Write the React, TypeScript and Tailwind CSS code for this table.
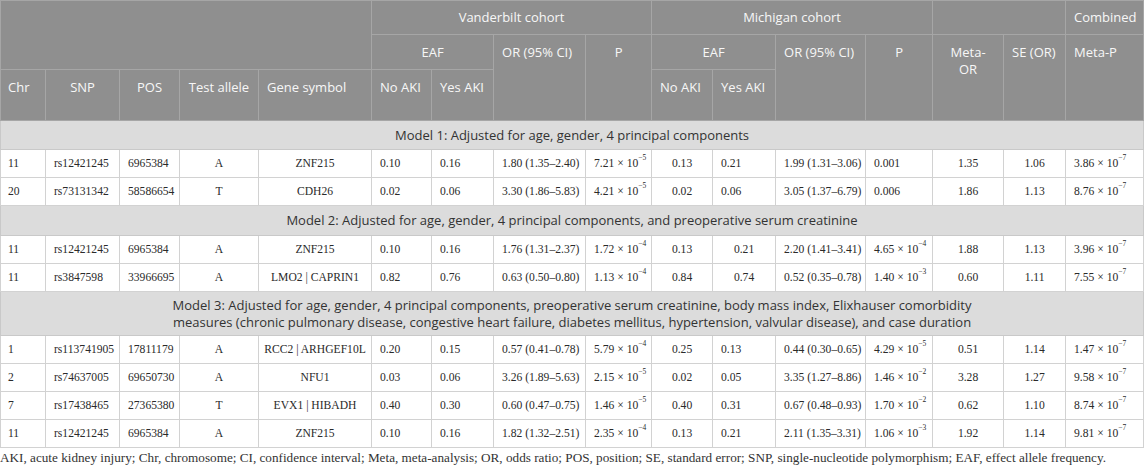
import React from "react";

type PV = string | { m: string; e: string };

type Row = {
  c: [string, string, string, string, string, string, string, string, PV, string, string, string, PV, string, string, PV];
  mYesCenter?: boolean;
};

const serif = "font-['Liberation_Serif','Times_New_Roman',serif]";
const sans = "font-['Open_Sans','Noto_Sans',sans-serif]";

const model1: Row[] = [
  { c: ["11", "rs12421245", "6965384", "A", "ZNF215", "0.10", "0.16", "1.80 (1.35–2.40)", { m: "7.21", e: "−5" }, "0.13", "0.21", "1.99 (1.31–3.06)", "0.001", "1.35", "1.06", { m: "3.86", e: "−7" }] },
  { c: ["20", "rs73131342", "58586654", "T", "CDH26", "0.02", "0.06", "3.30 (1.86–5.83)", { m: "4.21", e: "−5" }, "0.02", "0.06", "3.05 (1.37–6.79)", "0.006", "1.86", "1.13", { m: "8.76", e: "−7" }] },
];
const model2: Row[] = [
  { c: ["11", "rs12421245", "6965384", "A", "ZNF215", "0.10", "0.16", "1.76 (1.31–2.37)", { m: "1.72", e: "−4" }, "0.13", "0.21", "2.20 (1.41–3.41)", { m: "4.65", e: "−4" }, "1.88", "1.13", { m: "3.96", e: "−7" }], mYesCenter: true },
  { c: ["11", "rs3847598", "33966695", "A", "LMO2 | CAPRIN1", "0.82", "0.76", "0.63 (0.50–0.80)", { m: "1.13", e: "−4" }, "0.84", "0.74", "0.52 (0.35–0.78)", { m: "1.40", e: "−3" }, "0.60", "1.11", { m: "7.55", e: "−7" }], mYesCenter: true },
];
const model3: Row[] = [
  { c: ["1", "rs113741905", "17811179", "A", "RCC2 | ARHGEF10L", "0.20", "0.15", "0.57 (0.41–0.78)", { m: "5.79", e: "−4" }, "0.25", "0.13", "0.44 (0.30–0.65)", { m: "4.29", e: "−5" }, "0.51", "1.14", { m: "1.47", e: "−7" }] },
  { c: ["2", "rs74637005", "69650730", "A", "NFU1", "0.03", "0.06", "3.26 (1.89–5.63)", { m: "2.15", e: "−5" }, "0.02", "0.05", "3.35 (1.27–8.86)", { m: "1.46", e: "−2" }, "3.28", "1.27", { m: "9.58", e: "−7" }] },
  { c: ["7", "rs17438465", "27365380", "T", "EVX1 | HIBADH", "0.40", "0.30", "0.60 (0.47–0.75)", { m: "1.46", e: "−5" }, "0.40", "0.31", "0.67 (0.48–0.93)", { m: "1.70", e: "−2" }, "0.62", "1.10", { m: "8.74", e: "−7" }] },
  { c: ["11", "rs12421245", "6965384", "A", "ZNF215", "0.10", "0.16", "1.82 (1.32–2.51)", { m: "2.35", e: "−4" }, "0.13", "0.21", "2.11 (1.35–3.31)", { m: "1.06", e: "−3" }, "1.92", "1.14", { m: "9.81", e: "−7" }] },
];

const widths = [45, 74, 60, 79, 113, 60, 62, 92, 66, 61, 63, 90, 67, 71, 62, 78];
const align = ["l", "l", "l", "c", "c", "l", "l", "l", "l", "c", "l", "l", "l", "c", "c", "l"];

function Val({ v }: { v: PV }) {
  if (typeof v === "string") return <>{v}</>;
  return (
    <>
      {v.m} × 10<sup className="text-[7.5px] relative -top-[2px] align-super">{v.e}</sup>
    </>
  );
}

function DataRow({ r }: { r: Row }) {
  return (
    <tr>
      {r.c.map((v, i) => {
        let a = align[i];
        if (i === 10 && r.mYesCenter) a = "c";
        const pad = i === 0 ? "pl-[7px] pr-1" : i === 4 ? "px-1" : "px-2";
        return (
          <td
            key={i}
            className={`h-[28px] border border-[#d2d2d2] ${pad} align-middle whitespace-nowrap ${a === "c" ? "text-center" : "text-left"}`}
          >
            <Val v={v} />
          </td>
        );
      })}
    </tr>
  );
}

function ModelRow({ h, children }: { h: string; children: React.ReactNode }) {
  return (
    <tr>
      <td
        colSpan={16}
        className={`${h} ${sans} text-[13px] leading-[17px] text-[#333] bg-[#dcdcdc] border border-[#c9c9c9] text-center align-middle`}
      >
        {children}
      </td>
    </tr>
  );
}

export default function App() {
  const hb = "border border-[#a6a6a6]";
  const th = `${hb} font-normal px-2`;
  return (
    <div className="w-[1145px] h-[465px] bg-white overflow-hidden">
      <table className={`table-fixed border-collapse w-[1144px] ${serif} text-[11.6px] text-[#2a2a2a]`}>
        <colgroup>
          {widths.map((w, i) => (
            <col key={i} style={{ width: w }} />
          ))}
        </colgroup>
        <thead className={`${sans} text-[13px] leading-[17px] text-[#f7f7f7] bg-[#8f8f8f]`}>
          <tr>
            <th colSpan={5} rowSpan={2} className={th}></th>
            <th colSpan={4} className={`${th} h-[34px] text-center`}>Vanderbilt cohort</th>
            <th colSpan={4} className={`${th} text-center`}>Michigan cohort</th>
            <th colSpan={2} className={th}></th>
            <th className={`${th} text-left`}>Combined</th>
          </tr>
          <tr>
            <th colSpan={2} className={`${th} h-[35px] text-center`}>EAF</th>
            <th rowSpan={2} className={`${th} text-left align-top pt-[9px]`}>OR (95% CI)</th>
            <th rowSpan={2} className={`${th} text-center align-top pt-[9px]`}>P</th>
            <th colSpan={2} className={`${th} text-center`}>EAF</th>
            <th rowSpan={2} className={`${th} text-left align-top pt-[9px]`}>OR (95% CI)</th>
            <th rowSpan={2} className={`${th} text-center align-top pt-[9px]`}>P</th>
            <th rowSpan={2} className={`${th} text-center align-top pt-[9px]`}>
              Meta-
              <br />
              OR
            </th>
            <th rowSpan={2} className={`${th} text-left align-top pt-[9px] whitespace-nowrap`}>SE (OR)</th>
            <th rowSpan={2} className={`${th} text-left align-top pt-[9px]`}>Meta-P</th>
          </tr>
          <tr>
            <th className={`${hb} font-normal pl-[7px] text-left align-top pt-[9px] h-[51px]`}>Chr</th>
            <th className={`${th} text-center align-top pt-[9px]`}>SNP</th>
            <th className={`${th} text-center align-top pt-[9px]`}>POS</th>
            <th className={`${th} text-center align-top pt-[9px] whitespace-nowrap`}>Test allele</th>
            <th className={`${th} text-left align-top pt-[9px]`}>Gene symbol</th>
            <th className={`${th} text-left align-top pt-[9px] whitespace-nowrap`}>No AKI</th>
            <th className={`${th} text-left align-top pt-[9px] whitespace-nowrap`}>Yes AKI</th>
            <th className={`${th} text-left align-top pt-[9px] whitespace-nowrap`}>No AKI</th>
            <th className={`${th} text-left align-top pt-[9px] whitespace-nowrap`}>Yes AKI</th>
          </tr>
        </thead>
        <tbody>
          <ModelRow h="h-[29px]">Model 1: Adjusted for age, gender, 4 principal components</ModelRow>
          {model1.map((r, i) => (
            <DataRow key={i} r={r} />
          ))}
          <ModelRow h="h-[30px]">
            Model 2: Adjusted for age, gender, 4 principal components, and preoperative serum creatinine
          </ModelRow>
          {model2.map((r, i) => (
            <DataRow key={i} r={r} />
          ))}
          <ModelRow h="h-[44px]">
            Model 3: Adjusted for age, gender, 4 principal components, preoperative serum creatinine, body mass index, Elixhauser comorbidity
            <br />
            measures (chronic pulmonary disease, congestive heart failure, diabetes mellitus, hypertension, valvular disease), and case duration
          </ModelRow>
          {model3.map((r, i) => (
            <DataRow key={i} r={r} />
          ))}
        </tbody>
      </table>
      <p className={`${serif} text-[13.2px] leading-[16px] text-[#333] mt-[2px] whitespace-nowrap`}>
        AKI, acute kidney injury; Chr, chromosome; CI, confidence interval; Meta, meta-analysis; OR, odds ratio; POS, position; SE, standard error; SNP, single-nucleotide polymorphism; EAF, effect allele frequency.
      </p>
    </div>
  );
}
